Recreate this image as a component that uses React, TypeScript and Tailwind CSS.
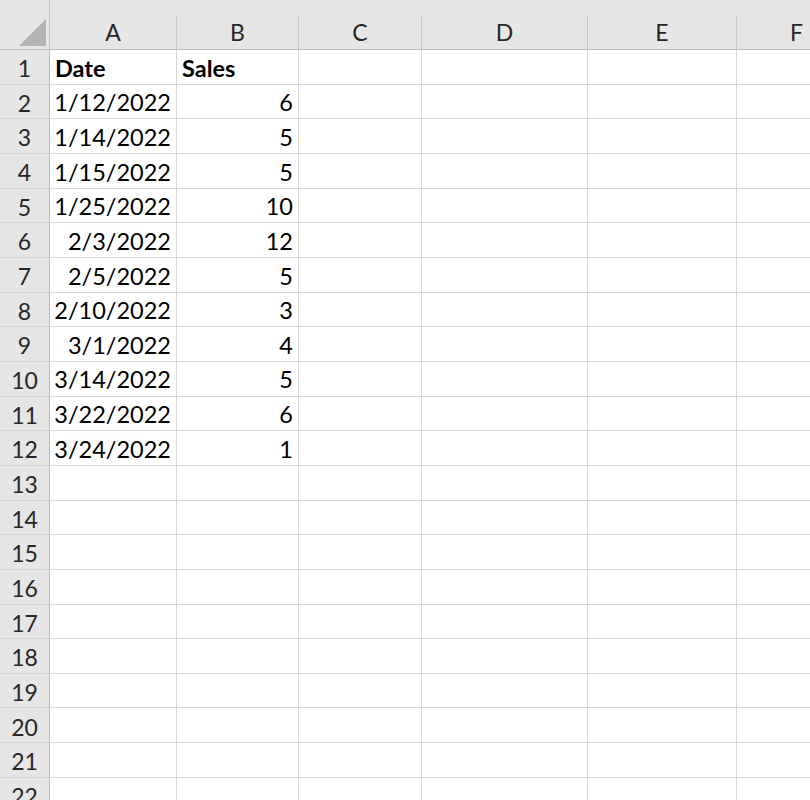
import React from 'react';

// Column letters with their pixel widths, as in the sheet
const columns = [
  { name: 'A', width: 'w-[127px]' },
  { name: 'B', width: 'w-[122px]' },
  { name: 'C', width: 'w-[123px]' },
  { name: 'D', width: 'w-[166px]' },
  { name: 'E', width: 'w-[149px]' },
  { name: 'F', width: 'w-[120px]' },
];

const data: [string, string][] = [
  ['1/12/2022', '6'],
  ['1/14/2022', '5'],
  ['1/15/2022', '5'],
  ['1/25/2022', '10'],
  ['2/3/2022', '12'],
  ['2/5/2022', '5'],
  ['2/10/2022', '3'],
  ['3/1/2022', '4'],
  ['3/14/2022', '5'],
  ['3/22/2022', '6'],
  ['3/24/2022', '1'],
];

const font = { fontFamily: 'Lato, "Open Sans", sans-serif' };

const App: React.FC = () => {
  const rows = Array.from({ length: 22 }, (_, i) => i + 1);

  const cellText = (row: number, col: number) => {
    if (row === 1) {
      if (col === 0) return { text: 'Date', bold: true, right: false };
      if (col === 1) return { text: 'Sales', bold: true, right: false };
      return null;
    }
    const item = data[row - 2];
    if (!item || col > 1) return null;
    return { text: item[col], bold: false, right: true };
  };

  return (
    <div className="w-[810px] h-[800px] overflow-hidden bg-white text-black" style={font}>
      {/* Column headers */}
      <div className="flex h-[50px] bg-[#e6e6e6] border-b border-[#bcbcbc]">
        <div className="w-[50px] shrink-0 pt-4 border-r border-[#c8c8c8] flex items-end justify-end pr-[3px] pb-[3px]">
          <svg width="27" height="27" viewBox="0 0 27 27">
            <polygon points="27,0 27,27 0,27" fill="#b4b4b4" />
          </svg>
        </div>
        {columns.map((c) => (
          <div key={c.name} className={`${c.width} shrink-0 pt-4`}>
            <div className="h-full border-r border-[#c8c8c8] flex items-center justify-center text-[23px] text-[#262626]">
              {c.name}
            </div>
          </div>
        ))}
      </div>

      {/* Rows */}
      {rows.map((r) => (
        <div key={r} className="flex h-[34.67px]">
          <div className="w-[50px] shrink-0 bg-[#e6e6e6] border-r border-[#bcbcbc] border-b border-b-[#d4d4d4] flex items-center justify-center text-[23px] text-[#262626] pt-[3px]">
            {r}
          </div>
          {columns.map((c, ci) => {
            const t = cellText(r, ci);
            return (
              <div
                key={c.name}
                className={`${c.width} shrink-0 border-r border-b border-[#d9d9d9] flex items-center px-[5px] pt-[3px] text-[23.5px] leading-none ${
                  t?.right ? 'justify-end' : 'justify-start'
                } ${t?.bold ? 'font-bold' : ''}`}
              >
                {t?.text}
              </div>
            );
          })}
        </div>
      ))}
    </div>
  );
};

export default App;
